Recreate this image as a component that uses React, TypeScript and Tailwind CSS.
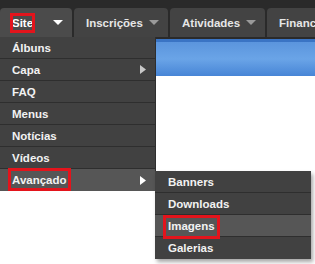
import React from 'react';

const font = { fontFamily: '"Liberation Sans", Arial, sans-serif' };

const DownArrow: React.FC<{ color: string }> = ({ color }) => (
  <svg width="10" height="5" viewBox="0 0 10 5" className="shrink-0">
    <path d="M0 0 L10 0 L5 5 Z" fill={color} />
  </svg>
);

const RightArrow: React.FC<{ color: string }> = ({ color }) => (
  <svg width="6" height="9" viewBox="0 0 6 9" className="shrink-0">
    <path d="M0 0 L6 4.5 L0 9 Z" fill={color} />
  </svg>
);

// red annotation box drawn around a label
const Marked: React.FC<{ children: React.ReactNode; inset: string }> = ({ children, inset }) => (
  <span className="relative">
    <span className={`pointer-events-none absolute border-[3px] border-[#e3141c] ${inset}`} />
    {children}
  </span>
);

type Tab = { label: string; width: string; active?: boolean; arrow?: boolean };

const tabs: Tab[] = [
  { label: 'Site', width: 'w-[72px]', active: true, arrow: true },
  { label: 'Inscrições', width: 'w-[94px]', arrow: true },
  { label: 'Atividades', width: 'w-[95px]', arrow: true },
  { label: 'Financeiro', width: 'w-[80px]' },
];

type Item = { label: string; sub?: boolean; hot?: boolean; mark?: string };

const siteItems: Item[] = [
  { label: 'Álbuns' },
  { label: 'Capa', sub: true },
  { label: 'FAQ' },
  { label: 'Menus' },
  { label: 'Notícias' },
  { label: 'Vídeos' },
  { label: 'Avançado', sub: true, hot: true, mark: '-inset-x-[4px] -top-[6px] -bottom-[5px]' },
];

const advItems: Item[] = [
  { label: 'Banners' },
  { label: 'Downloads' },
  { label: 'Imagens', hot: true, mark: '-inset-x-[5px] -top-[5px] -bottom-[7px]' },
  { label: 'Galerias' },
];

const MenuRow: React.FC<{ item: Item; pad: string; last?: boolean }> = ({ item, pad, last }) => (
  <div
    className={`flex h-[22px] items-center justify-between ${pad} pr-[9px] ${
      last ? '' : 'border-b border-[#2e2e2e]'
    } ${item.hot ? 'bg-[#565656]' : ''}`}
  >
    <span className="leading-[14px]">
      {item.mark ? <Marked inset={item.mark}>{item.label}</Marked> : item.label}
    </span>
    {item.sub && <RightArrow color={item.hot ? '#ffffff' : '#c8c8c8'} />}
  </div>
);

const App: React.FC = () => {
  return (
    <div className="relative h-[264px] w-[315px] overflow-hidden bg-white" style={font}>
      <div className="flex h-[39px] gap-[2px] overflow-hidden bg-[#2a2a2a] pt-[8px] pb-[2px]">
        {tabs.map((t) => (
          <div
            key={t.label}
            className={`flex ${t.width} shrink-0 items-center justify-between rounded-t-[4px] pr-[9px] text-[11.5px] font-bold ${
              t.active ? 'bg-[#4b4b4b] pl-[12px] text-white' : 'bg-[#434343] pl-[12px] text-[#e6e6e6]'
            }`}
          >
            <span className="leading-[14px] whitespace-nowrap">
              {t.active ? <Marked inset="-left-[2px] -right-[2px] -top-[4px] -bottom-[4px]">{t.label}</Marked> : t.label}
            </span>
            {t.arrow && <DownArrow color={t.active ? '#ffffff' : '#9a9a9a'} />}
          </div>
        ))}
      </div>

      <div className="ml-[156px] h-[37px] border-t-[3px] border-[#3a74c4] bg-gradient-to-b from-[#5b95dd] via-[#6aa4e7] to-[#4785d6]" />

      <div className="absolute left-0 top-[37px] w-[156px] border-r border-[#2e2e2e] bg-[#414141] text-[11.5px] font-bold text-[#f2f2f2]">
        {siteItems.map((it, i) => (
          <MenuRow key={it.label} item={it} pad="pl-[12px]" last={i === siteItems.length - 1} />
        ))}
      </div>

      <div className="absolute left-[155px] top-[171px] w-[156px] bg-[#414141] text-[11.5px] font-bold text-[#f2f2f2] shadow-[2px_3px_4px_rgba(0,0,0,0.35)]">
        {advItems.map((it, i) => (
          <MenuRow key={it.label} item={it} pad="pl-[13px]" last={i === advItems.length - 1} />
        ))}
      </div>
    </div>
  );
};

export default App;
